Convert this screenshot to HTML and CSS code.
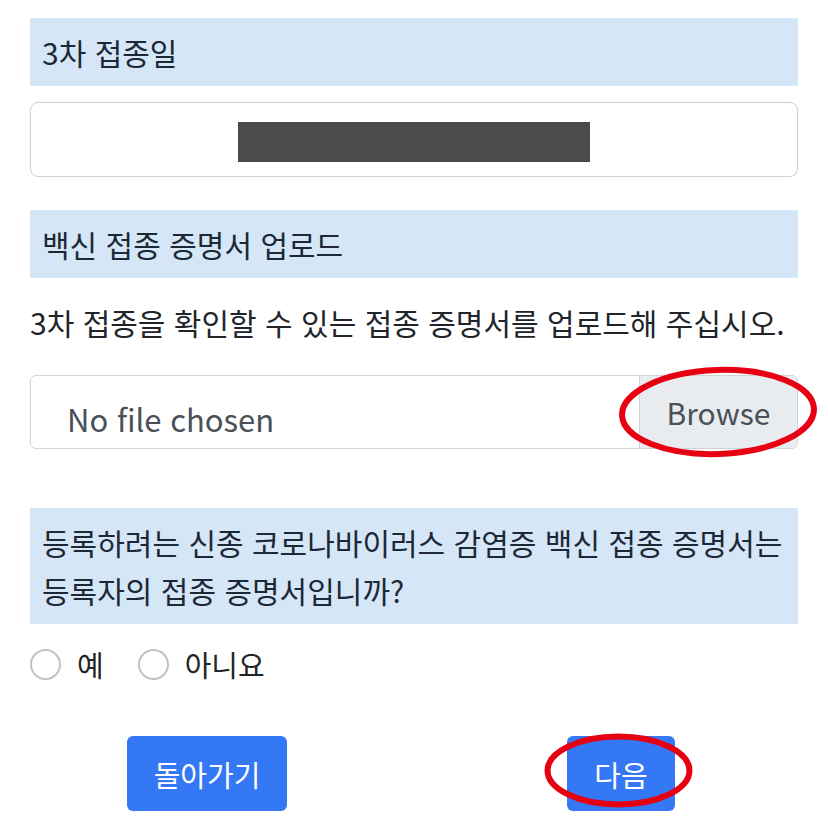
FILE: index.html
```html
<!DOCTYPE html>
<html lang="ko">
<head>
    <meta charset="UTF-8">
    <meta name="viewport" content="width=device-width, initial-scale=1.0">
    <title>백신 접종 증명서 등록</title>
    <link rel="stylesheet" href="styles.css">
</head>
<body>

<div class="container">
    <div class="label first">3차 접종일</div>
    <div class="field"><div class="redact"></div></div>

    <div class="label upload">백신 접종 증명서 업로드</div>
    <p class="desc">3차 접종을 확인할 수 있는 접종 증명서를 업로드해 주십시오.</p>

    <div class="file">
        <span class="file-name">No file chosen</span>
        <span class="browse">Browse
            <svg class="mark mark-browse" viewBox="0 0 200 92" width="200" height="92"><ellipse cx="100" cy="46" rx="96" ry="42" fill="none" stroke="#e60012" stroke-width="6" transform="rotate(-2 100 46)"/></svg>
        </span>
    </div>

    <div class="label question">등록하려는 신종 코로나바이러스 감염증 백신 접종 증명서는 등록자의 접종 증명서입니까?</div>

    <div class="radios">
        <label class="radio"><span class="dot"></span>예</label>
        <label class="radio"><span class="dot"></span>아니요</label>
    </div>

    <div class="actions">
        <div class="cell"><button class="btn">돌아가기</button></div>
        <div class="cell"><button class="btn next">다음
            <svg class="mark mark-next" viewBox="0 0 149 75" width="149" height="75"><ellipse cx="74.5" cy="37.5" rx="71" ry="34" fill="none" stroke="#e60012" stroke-width="6"/></svg>
        </button></div>
    </div>
</div>

</body>
</html>
```

FILE: styles.css
```css
body { margin: 0; background: #fff; color: #212529; font-family: "Noto Sans CJK KR", "Noto Sans", sans-serif; font-size: 30px; }
.container { padding: 18px 30px 0 30px; display: flex; flex-direction: column; }
.label { background: #d5e6f7; padding: 10px 12px; line-height: 48px; color: #1c2836; word-break: keep-all; }
.field { margin-top: 16px; height: 75px; border: 1px solid #cfcfcf; border-radius: 8px; display: flex; justify-content: center; align-items: center; padding-top: 4px; box-sizing: border-box; }
.redact { width: 352px; height: 40px; background: #4b4b4b; }
.upload { margin-top: 33px; }
.desc { margin: 20px 0 0; line-height: 48px; }
.file { margin-top: 29px; height: 74px; border: 1px solid #d2d2d2; border-radius: 6px; display: flex; box-sizing: border-box; }
.file-name { flex: 1; padding: 20px 0 0 36px; color: #495057; font-size: 31px; }
.browse { position: relative; width: 157px; background: #e9ecef; border-left: 1px solid #d2d2d2; border-radius: 0 6px 6px 0; display: flex; align-items: center; justify-content: center; color: #495057; font-size: 30px; }
.question { margin-top: 59px; }
.radios { margin-top: 16px; display: flex; gap: 34px; line-height: 48px; font-size: 29px; }
.radio { display: flex; align-items: center; gap: 16px; }
.dot { width: 27px; height: 27px; border: 2px solid #c2c2c2; border-radius: 50%; }
.actions { margin: 48px -30px 0; display: flex; }
.cell { flex: 1; display: flex; justify-content: center; }
.btn { position: relative; height: 75px; padding: 0 27px; background: #3478f6; color: #fff; border: none; border-radius: 6px; font-family: inherit; font-size: 29px; }
.mark { position: absolute; pointer-events: none; }
.mark-browse { left: -22px; top: -10px; }
.mark-next { left: -23px; top: -3px; }
```
